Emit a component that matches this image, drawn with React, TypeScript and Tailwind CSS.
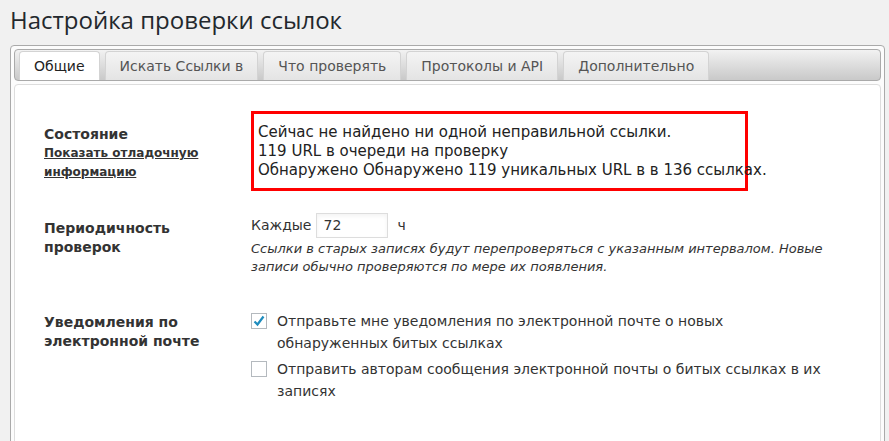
const tabs = ["Общие", "Искать Ссылки в", "Что проверять", "Протоколы и API", "Дополнительно"];

export default function App() {
  return (
    <div
      className="w-[889px] h-[441px] overflow-hidden bg-[#f1f1f1] text-[#333] text-[14px]"
      style={{ fontFamily: '"DejaVu Sans", Verdana, sans-serif' }}
    >
      <h1
        className="pl-[10px] pt-[4px] h-[44px] text-[24px] text-[#23282d] leading-[32px]"
        style={{ fontFamily: '"Open Sans", "Noto Sans", sans-serif' }}
      >
        Настройка проверки ссылок
      </h1>
      <div className="ml-[10px] mr-[4px] mt-[1px] border border-[#aaa] rounded-[4px] bg-[#fcfcfc] p-[3px]">
        <div className="h-[32px] rounded-[4px] border border-[#aaa] bg-gradient-to-b from-[#f2f2f2] to-[#c9c9c9] flex items-end gap-[5px] pl-[4px]">
          {tabs.map((t, i) => (
            <div
              key={t}
              className={
                "h-[29px] px-[14px] flex items-center rounded-t-[4px] border border-b-0 border-[#d3d3d3] text-[14px] " +
                (i === 0 ? "bg-white text-[#222]" : "bg-gradient-to-b from-[#f4f4f4] to-[#e4e4e4] text-[#555]")
              }
            >
              {t}
            </div>
          ))}
        </div>
        <div className="mt-[3px] h-[400px] bg-white border border-[#ddd] rounded-[4px] pt-[26px] pl-[29px]">
          <div className="flex">
            <div className="w-[207px] pt-[14px] leading-[19px]">
              <div className="font-bold">Состояние</div>
              <a className="font-bold underline text-[12px] leading-[19px] block w-[170px]">Показать отладочную информацию</a>
            </div>
            <div className="border-[3px] border-[#f00] w-[497px] h-[80px] pl-[4px] pt-[9px] leading-[19px] text-[15px] text-[#222] whitespace-nowrap">
              <div>Сейчас не найдено ни одной неправильной ссылки.</div>
              <div>119 URL в очереди на проверку</div>
              <div>Обнаружено Обнаружено 119 уникальных URL в в 136 ссылках.</div>
            </div>
          </div>

          <div className="flex mt-[22px]">
            <div className="w-[207px] font-bold leading-[19px] pt-[6px]">
              Периодичность<br />проверок
            </div>
            <div>
              <div className="flex items-center gap-[5px]">
                <span>Каждые</span>
                <div className="w-[72px] h-[25px] border border-[#ddd] pl-[6px] leading-[23px] shadow-inner">72</div>
                <span className="ml-[4px]">ч</span>
              </div>
              <div className="italic text-[13px] leading-[18px] mt-[2px] w-[600px] text-[#333]">
                Ссылки в старых записях будут перепроверяться с указанным интервалом. Новые записи обычно проверяются по мере их появления.
              </div>
            </div>
          </div>

          <div className="flex mt-[34px]">
            <div className="w-[207px] font-bold leading-[19px] pt-[3px]">
              Уведомления по<br />электронной почте
            </div>
            <div className="w-[585px] leading-[22px]">
              <div className="relative pl-[26px]">
                <span className="absolute left-0 top-[3px] w-[16px] h-[16px] border border-[#b4b9be] bg-white flex items-center justify-center">
                  <svg width="14" height="14" viewBox="0 0 14 14"><path d="M2.5 7.5 L5.5 10.5 L11.5 2.5" stroke="#1e8cbe" strokeWidth="2.2" fill="none" /></svg>
                </span>
                Отправьте мне уведомления по электронной почте о новых обнаруженных битых ссылках
              </div>
              <div className="relative pl-[26px] mt-[4px]">
                <span className="absolute left-0 top-[3px] w-[16px] h-[16px] border border-[#b4b9be] bg-white" />
                Отправить авторам сообщения электронной почты о битых ссылках в их записях
              </div>
            </div>
          </div>

          <div className="flex mt-[40px]">
            <div className="w-[207px] font-bold text-right pr-[45px] pt-[4px]">Настройки уведомлений</div>
            <div className="w-[350px] h-[30px] border border-[#ddd]" />
          </div>
        </div>
      </div>
    </div>
  );
}
